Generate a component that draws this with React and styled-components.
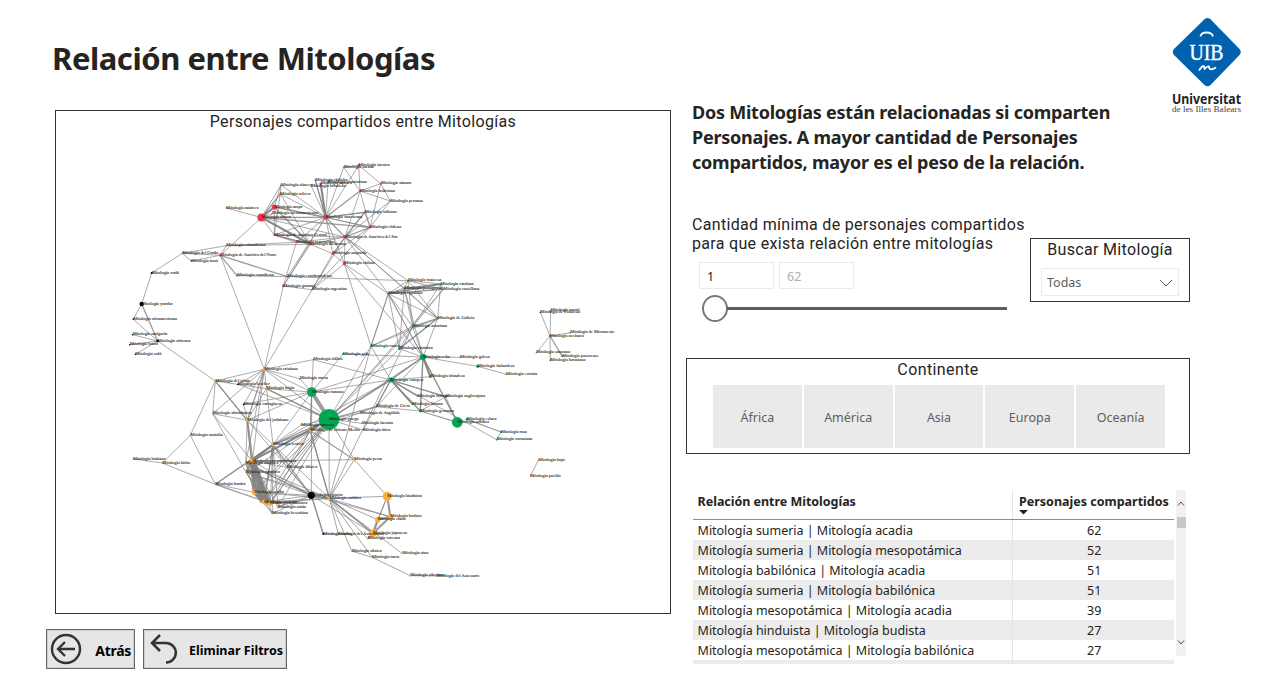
import React from "react";
import styled, { createGlobalStyle } from "styled-components";

const UI = `"Noto Sans", "Open Sans", sans-serif`;
const DIN = `Roboto, "Liberation Sans", sans-serif`;

const GlobalStyle = createGlobalStyle`
  * { box-sizing: border-box; }
  body { margin: 0; background: #fff; color: #252423; font-family: ${UI}; }
`;

const Page = styled.main`
  display: flex;
  gap: 15px;
  width: 1275px;
  height: 677px;
  overflow: hidden;
  background: #fff;
`;
const LeftColumn = styled.section`
  display: flex;
  flex-direction: column;
  width: 671px;
  padding: 36px 0 0 46px;
`;
const RightColumn = styled.section`
  display: flex;
  flex-direction: column;
  width: 560px;
`;
const Title = styled.h1`
  margin: 0 0 0 6px;
  height: 74px;
  font-size: 31px;
  line-height: 45px;
  font-weight: 700;
  letter-spacing: -0.45px;
  white-space: nowrap;
`;
const Panel = styled.div`
  border: 1px solid #333;
  background: #fff;
`;
const PanelTitle = styled.h2`
  margin: 0;
  height: 20px;
  font: 400 16px/22px ${DIN};
  letter-spacing: ${(p) => p.$spacing || 0.34}px;
  text-align: center;
  white-space: nowrap;
`;
const GraphPanel = styled(Panel)`
  width: 616px;
  height: 504px;
  margin-left: 9px;
`;
const Graph = styled.svg`
  display: block;
  width: 614px;
  height: 482px;
  line { stroke: #808080; stroke-opacity: 0.78; }
  text { font: 4.42px "Liberation Serif", serif; fill: #222; stroke: #222; stroke-width: 0.08px; }
`;
const Actions = styled.div`
  display: flex;
  gap: 8px;
  margin-top: 15px;
`;
const ActionButton = styled.button`
  display: flex;
  align-items: center;
  justify-content: space-between;
  width: ${(p) => p.$width}px;
  height: 40px;
  padding: 0 3px 0 3px;
  border: 1px solid #666;
  outline: 1px solid #cfcfcf;
  outline-offset: -2px;
  background: #e6e6e6;
  color: #000;
  font: 700 ${(p) => p.$size}px/20px ${UI};
  letter-spacing: ${(p) => p.$spacing}px;
  white-space: nowrap;
  svg { flex: none; }
  span { padding-top: 3px; }
`;
const Intro = styled.div`
  display: flex;
  justify-content: space-between;
  height: 215px;
  padding: 0 3px 0 6px;
`;
const Statement = styled.p`
  margin: 100px 0 0;
  font-size: 18px;
  line-height: 25px;
  font-weight: 700;
  letter-spacing: -0.23px;
  white-space: nowrap;
`;
const Logo = styled.svg`
  width: 72px;
  height: 100px;
  margin-top: 16px;
  overflow: visible;
`;
const Filters = styled.div`
  display: flex;
  height: 143px;
  padding-left: 6px;
`;
const Threshold = styled.div`
  width: 338px;
`;
const ThresholdLabel = styled.div`
  font: 400 16px/19px ${DIN};
  letter-spacing: 0.32px;
  white-space: nowrap;
`;
const Inputs = styled.div`
  display: flex;
  gap: 5px;
  margin: 9px 0 0 7px;
`;
const NumberBox = styled.div`
  width: 75px;
  height: 27px;
  padding-left: 7px;
  border: 1px solid #eaeaea;
  font-size: 12.5px;
  line-height: 28px;
  color: ${(p) => (p.$muted ? "#b3b0ad" : "#252423")};
`;
const Slider = styled.div`
  display: flex;
  align-items: center;
  margin: 6px 0 0 10px;
`;
const Thumb = styled.div`
  width: 26px;
  height: 27px;
  border: 2px solid #7b7977;
  border-radius: 50%;
  background: #fff;
`;
const Track = styled.div`
  width: 280px;
  height: 3px;
  margin-left: -1px;
  background: #605e5c;
`;
const SearchPanel = styled(Panel)`
  width: 160px;
  height: 64px;
  margin-top: 23px;
`;
const Select = styled.div`
  display: flex;
  align-items: center;
  justify-content: space-between;
  width: 138px;
  height: 28px;
  margin: 9px 0 0 10px;
  padding: 1px 5px 0;
  border: 1px solid #eaeaea;
  font-size: 12.5px;
  color: #605e5c;
`;
const ContinentPanel = styled(Panel)`
  width: 504px;
  height: 96px;
  flex: none;
`;
const Tiles = styled.div`
  display: flex;
  gap: 2px;
  margin: 6px 0 0 26px;
`;
const Tile = styled.div`
  width: 88.8px;
  height: 63px;
  background: #eaeaea;
  color: #605e5c;
  font-size: 12.5px;
  line-height: 66px;
  text-align: center;
`;
const TableArea = styled.div`
  display: flex;
  gap: 2px;
  height: 174px;
  margin: 36px 0 0 7px;
`;
const Table = styled.div`
  width: 481px;
  height: 174px;
  overflow: hidden;
`;
const Row = styled.div`
  display: grid;
  grid-template-columns: 320px 161px;
  grid-template-rows: 100%;
  height: 20px;
  background: ${(p) => (p.$striped ? "#ececec" : "#fff")};
  font-size: 12.5px;
  line-height: 22px;
  white-space: nowrap;
`;
const HeaderRow = styled(Row)`
  height: 30px;
  border-bottom: 1px solid #3aa0ff;
  font-weight: 700;
  line-height: 23px;
`;
const Cell = styled.div`
  padding-left: 4.6px;
  border-right: 1px solid #e6e6e6;
  letter-spacing: -0.03px;
`;
const CountCell = styled.div`
  padding-left: 74px;
`;
const CountHeader = styled.div`
  padding-left: 6px;
  svg { display: block; margin-top: -3px; }
`;
const Scrollbar = styled.div`
  display: flex;
  flex-direction: column;
  align-items: center;
  width: 10px;
  height: 166px;
  padding: 11px 0 11px;
  background: #f1f1f1;
`;
const ScrollThumb = styled.div`
  width: 9px;
  height: 11px;
  margin: 11px 0 auto;
  background: #c8c8c8;
`;

const RED = "#ee334e", GREEN = "#00a651", GOLD = "#fcaf2c", BLACK = "#000", BLUE = "#0081c8";

/* key: [x, y, radius, colour, label] */
const nodes = {
  tuc: [343.7, 167.3, 0.7, RED, "tucana"],
  inc: [358.7, 165.3, 1.2, RED, "incaica"],
  olm: [281, 185, 0.7, RED, "olmeca"],
  tol: [280.3, 194, 1, RED, "tolteca"],
  may: [274.3, 207, 2.6, RED, "maya"],
  mix: [226.3, 208, 0.7, RED, "mixteca"],
  azt: [261.5, 217.5, 4.1, RED, "azteca"],
  mes: [272, 213.7, 0.8, RED, "mesoamericana"],
  cen: [274.3, 235, 1, RED, "de América Central"],
  chi: [315.3, 180, 0.8, RED, "chibcha"],
  mui: [320.7, 183.7, 1.3, RED, "muisca"],
  ecu: [328, 182, 0.8, RED, "ecuatoriana"],
  bra: [311.3, 186.3, 0.7, RED, "brasileña"],
  ama: [325.7, 217.3, 2.4, RED, "americana"],
  aim: [380.7, 183.7, 1, RED, "aimara"],
  bol: [360, 191, 0.9, RED, "boliviana"],
  per: [390.3, 201, 0.7, RED, "peruana"],
  teh: [364.7, 212.3, 1.1, RED, "talhuare"],
  cle: [370, 227.3, 1.2, RED, "chilena"],
  sur: [345, 237, 1.8, RED, "de América del Sur"],
  ven: [296.3, 242.3, 1, RED, "venezolana"],
  mex: [310.3, 244.3, 1.3, RED, "mexicana"],
  map: [332.7, 253.7, 1.2, RED, "mapuche"],
  clo: [344.3, 263.7, 1.6, RED, "chilota"],
  col: [226.3, 245.7, 0.8, RED, "colombiana"],
  nor: [220.3, 255.3, 1.2, RED, "de América del Norte"],
  can: [237, 275.7, 0.9, RED, "canadiense"],
  est: [287.3, 276.7, 0.9, RED, "estadounidense"],
  gua: [283.3, 286, 1.2, RED, "guaraní"],
  arg: [312, 289.7, 0.8, RED, "argentina"],
  car: [182.3, 253.3, 0.8, RED, "del Caribe"],
  inu: [191.3, 261, 0.9, RED, "inuit"],
  vud: [151.7, 273, 1.1, BLACK, "vudú"],
  yor: [141.7, 304, 2.2, BLACK, "yoruba"],
  afm: [133.3, 319.3, 0.8, BLACK, "afroamericana"],
  mal: [132.7, 334.7, 0.8, BLACK, "malgache"],
  afr: [157.7, 341, 1.3, BLACK, "africana"],
  ban: [129.7, 344.7, 0.7, BLACK, "bantú"],
  zul: [135.3, 354.3, 0.8, BLACK, "zulú"],
  cri: [264.3, 369.3, 1.5, GOLD, "cristiana"],
  fra: [408, 280.7, 1, GREEN, "francesa"],
  cat: [440.7, 284, 0.9, GREEN, "catalana"],
  cas: [443.3, 289.3, 0.6, GREEN, "castellana"],
  por: [404.3, 288.3, 0.9, GREEN, "portuguesa"],
  esp: [388.3, 293.7, 1.1, GREEN, "española"],
  gal: [437.7, 318.3, 1.1, GREEN, "de Galicia"],
  ast: [412.7, 326.7, 1.2, GREEN, "asturiana"],
  cab: [399.3, 348.7, 1.2, GREEN, "cántabra"],
  vas: [371, 346.3, 1.1, GREEN, "vasca"],
  gaa: [343, 354, 0.9, GREEN, "gala"],
  cel: [423, 357, 3.1, GREEN, "celta"],
  gls: [460.3, 357.3, 0.8, GREEN, "galesa"],
  fin: [477.7, 366.3, 1.6, GREEN, "finlandesa"],
  eto: [506.3, 374.3, 0.7, GREEN, "estonia"],
  irl: [430.3, 376.7, 1.4, GREEN, "irlandesa"],
  eur: [390.7, 380, 2.5, GREEN, "europea"],
  pol: [540.3, 312.3, 0.9, BLUE, "de Polinesia"],
  mao: [550.7, 310.7, 0.9, BLUE, "maorí"],
  mic: [570.3, 332.7, 0.8, BLUE, "de Micronesia"],
  oce: [550, 336, 1, BLUE, "oceánica"],
  sam: [536.3, 352.7, 0.6, BLUE, "samoana"],
  pas: [562.3, 356.3, 0.9, BLUE, "pascuense"],
  haw: [550.3, 360.3, 0.9, BLUE, "hawaiana"],
  bri: [417.7, 396.3, 0.8, GREEN, "britana"],
  ang: [445.7, 396.7, 1.1, GREEN, "anglosajona"],
  cre: [376.3, 406.7, 0.9, GREEN, "de Creta"],
  lit: [412.3, 404.3, 0.7, GREEN, "lituana"],
  ger: [420.3, 411, 1.4, GREEN, "germana"],
  esl: [467, 419.3, 1.3, GREEN, "eslava"],
  nrd: [457.3, 422.3, 5.4, GREEN, "nórdica"],
  rus: [501, 432, 1, GREEN, "rusa"],
  ucr: [496.7, 439.7, 0.9, GREEN, "ucraniana"],
  ago: [360.3, 413, 0.5, GREEN, "de Argólida"],
  lac: [361.7, 423.3, 0.5, GREEN, "laconia"],
  ati: [363.3, 430, 0.7, GREEN, "ática"],
  hop: [538.3, 460.3, 0.5, RED, "hopi"],
  pue: [530.3, 476, 0.5, RED, "pueblo"],
  isl: [215.3, 381, 1.2, GOLD, "del islam"],
  ber: [238, 384.3, 0.9, BLACK, "bereber"],
  fri: [266.3, 388.7, 1.3, GOLD, "frigia"],
  ctg: [243.7, 404.3, 0.9, BLACK, "cartaginesa"],
  abr: [212.7, 413.7, 0.8, GOLD, "abrahámica"],
  jud: [247.3, 420.3, 1.9, GOLD, "del judaísmo"],
  tra: [299.7, 378.7, 0.7, GREEN, "tracia"],
  ita: [313.3, 359.7, 0.6, GREEN, "itálica"],
  rom: [311.7, 392, 4.8, GREEN, "romana"],
  gri: [329, 419.3, 10.4, GREEN, "griega"],
  gno: [301.3, 425, 1.2, GOLD, "armenia"],
  ori: [310.3, 430.7, 1.3, GOLD, "de Oriente Medio"],
  fen: [273, 444.7, 1.6, GOLD, "fenicia"],
  ana: [190.3, 435.3, 0.6, GOLD, "anatolia"],
  pea: [354.3, 459.7, 1.4, GOLD, "persa"],
  fil: [286.7, 467.3, 0.6, GOLD, "filistea"],
  cnn: [245.7, 463.3, 1.3, GOLD, "cananea"],
  msp: [252.3, 461, 2.7, GOLD, "mesopotámica"],
  uga: [246, 472.3, 1, GOLD, "ugarítica"],
  hat: [133, 459, 0.5, GOLD, "haitiana"],
  hit: [162.3, 463, 1, GOLD, "hitita"],
  hur: [215.3, 484.3, 1, GOLD, "hurrita"],
  aca: [254.3, 492.3, 2.5, GOLD, "acadia"],
  sum: [264, 502, 2.4, GOLD, "sumeria"],
  bab: [270.3, 503.3, 2.6, GOLD, "babilónica"],
  asi: [278, 507.3, 1.2, GOLD, "asiria"],
  bes: [272.3, 513.7, 0.8, GOLD, "beseritina"],
  egi: [311.3, 495.3, 3.6, BLACK, "egipcia"],
  asa: [329.3, 498.3, 1.8, GOLD, "asiática"],
  hin: [387.3, 496.3, 4.5, GOLD, "hinduista"],
  bud: [390.3, 516.7, 2.7, GOLD, "budista"],
  chn: [377.7, 519.7, 2.8, GOLD, "china"],
  jap: [373, 533.3, 3.8, GOLD, "japonesa"],
  cor: [367.7, 538.7, 1.1, GOLD, "coreana"],
  nub: [323.3, 534, 0.9, BLACK, "nubia"],
  asc: [338.3, 534, 0.6, GOLD, "del Asia central"],
  alt: [351.7, 551, 0.8, GOLD, "altaica"],
  tur: [372, 557.3, 1, GOLD, "turca"],
  ain: [402.3, 553.7, 0.6, GOLD, "ainu"],
  sib: [410.3, 575.7, 1, GOLD, "siberiana"],
  asn: [436.7, 576, 0.9, GOLD, "del Asia norte"],
};

/* [stroke width, "origin target target|origin target ..."] */
const links = [
  [0.85, "tuc inc bol ama|inc bol aim ama|bol aim per cle sur|aim per cle|per cle sur|teh cle ama|cle ama|olm azt may ama tol|tol ama cen mex|may ama cen|mix azt|azt nor sur cen mes|cen sur ven mex ama|chi ama|bra ama|ecu ama|ama map clo ven gua cle est|ven col gua sur|mex sur col gua map|map arg clo teh cle|clo arg esp cel|sur clo map gal por esp fra|col car|nor car inu col cri|car vud inu|can est|gua arg cri|arg sur cri cle|est fra|clo vas|vud yor|afm yor afr|mal afr|zul afr|ban afr|afr isl"],
  [0.85, "fra cat por esp gal cas ast|cat por esp cas gal ast|cas por esp ast|por gal ast cab cel|esp gal ast vas cab cel cas|gal cab cel vas|ast cel vas cab|cab cel gri|vas eur gri|gaa cel|cel gls fin gri rom ger nrd eur esp|fin eto|eur irl rom gri ita lit ang ger bri ucr|ang ger nrd|cre ger|cre cel|rus ucr|eur ati|ago gri|lac gri|ati gri|gaa rom|gri pea cas asa ast"],
  [0.85, "pol oce|mao oce|mic oce|sam oce|haw oce|hop pue|isl cri abr fri jud|ber cri gri|ctg rom cri jud|abr cri jud msp uga|fri rom gri jud|cri ita rom msp cnn gri tra fen|tra rom|ita rom|rom fen ori jud|ana isl hur hit|hat hit|hit hur|hur fen aca|ori rom asa gri|gno gri fen|pea asa hin|fil fen gri egi|fen bab sum asi bes asa ori|uga bab sum bes egi asa|cnn aca sum bab egi asa|msp asi bes egi|aca egi bes asa|sum asa egi|bab asa gri|bes egi|asi egi gri|jud fen cnn aca egi|fen cre eur|msp fil pea|rom egi"],
  [0.9, "asa hin bud chn cor asc alt tur ain jap|hin chn jap|alt tur|tur sib|sib asn|egi nub bud asa jap|nub asc|ori sum bab aca|gri sum bab aca cnn msp fil uga|vas esp|asa ast vas"],
  [1.3, "azt may tol ama mex cle|may mex ama|mui ama|chi ama|bol ama|sur ama teh cle|mex cen|nor can est|teh ama|yor afr|esp cat por|por cat|gal ast cab|cel ger irl eur|eur bri ang ger lit|ger nrd|nrd cel|esl rus|oce pas|fri gri|cri jud|isl jud|gri eur ori cre|cre eur|ori pea asa|fen gri egi sum cnn msp|hur fen bab|cnn egi|egi nub asa|msp gri bab|asa jap|jap cor|msp ori"],
  [2.2, "mui ama|azt may|jud msp|bud chn jap|hin bud|chn jap|fen msp|msp uga|azt mex|cel irl"],
  [4, "msp aca|msp sum|msp bab|aca sum|sum bab|rom gri|aca bab"],
  [8, "msp sum"],
];

const edges = links.flatMap(([width, text]) =>
  text.split("|").flatMap((group) => {
    const [from, ...targets] = group.split(" ");
    return targets.map((to) => ({ from: nodes[from], to: nodes[to], width }));
  })
);

function MythGraph() {
  return (
    <Graph viewBox="56 131 614 482">
      {edges.map((e, i) => (
        <line key={i} x1={e.from[0]} y1={e.from[1]} x2={e.to[0]} y2={e.to[1]} strokeWidth={e.width} />
      ))}
      {Object.entries(nodes).map(([key, [x, y, r, color]]) => (
        <circle key={key} cx={x} cy={y} r={r} fill={color} />
      ))}
      {Object.entries(nodes).map(([key, [x, y, , , label]]) => (
        <text key={key} x={x} y={y + 0.5}>Mitología {label}</text>
      ))}
    </Graph>
  );
}

function UibLogo() {
  return (
    <Logo viewBox="0 0 72 100">
      <path d="M33.5 3.3Q36.500 .8 39.500 3.300L68.500 33Q71 36 68.500 39L39.500 69Q36.500 71.500 33.500 69L3 39Q.5 36 3 33Z" fill="#0061af" />
      <path d="M29.500 20.500Q30 16.500 35.500 16.500T42 20.500" fill="none" stroke="#fff" strokeWidth="1.800" />
      <path d="M28 54.500q4-6 5-4t0 3q4-4 5-3 0 5 7 1" fill="none" stroke="#fff" strokeWidth="1.800" />
      <text x="35.500" y="43.500" textAnchor="middle" textLength="34" lengthAdjust="spacingAndGlyphs" fill="#fff" fontFamily="Liberation Serif, serif" fontSize="23" stroke="#fff" strokeWidth=".4">UIB</text>
      <text x="1" y="87.500" textLength="69" lengthAdjust="spacingAndGlyphs" fill="#222" fontFamily="Noto Sans, sans-serif" fontWeight="700" fontSize="13.500">Universitat</text>
      <text x="1" y="95.500" textLength="69" lengthAdjust="spacingAndGlyphs" fill="#444" fontFamily="Liberation Serif, serif" fontSize="8.500">de les Illes Balears</text>
    </Logo>
  );
}

const continents = ["África", "América", "Asia", "Europa", "Oceanía"];
const rows = [
  ["Mitología sumeria | Mitología acadia", 62],
  ["Mitología sumeria | Mitología mesopotámica", 52],
  ["Mitología babilónica | Mitología acadia", 51],
  ["Mitología sumeria | Mitología babilónica", 51],
  ["Mitología mesopotámica | Mitología acadia", 39],
  ["Mitología hinduista | Mitología budista", 27],
  ["Mitología mesopotámica | Mitología babilónica", 27],
];

export default function App() {
  return (
    <>
      <GlobalStyle />
      <Page>
        <LeftColumn>
          <Title>Relación entre Mitologías</Title>
          <GraphPanel>
            <PanelTitle>Personajes compartidos entre Mitologías</PanelTitle>
            <MythGraph />
          </GraphPanel>
          <Actions>
            <ActionButton $width={89} $size={14} $spacing={-0.3}>
              <svg width="32" height="32" viewBox="0 0 32 32" fill="none" stroke="#333" strokeWidth="2.400">
                <circle cx="16" cy="16" r="14" />
                <path d="M25 16H8M15 9l-7 7 7 7" />
              </svg>
              <span>Atrás</span>
            </ActionButton>
            <ActionButton $width={144} $size={12.5} $spacing={0}>
              <svg width="32" height="32" viewBox="0 0 32 32" fill="none" stroke="#333" strokeWidth="2.500">
                <path d="M13 2L5 10l8 8M5 10h14a9.800 9.800 0 0 1 0 19.600" />
              </svg>
              <span>Eliminar Filtros</span>
            </ActionButton>
          </Actions>
        </LeftColumn>
        <RightColumn>
          <Intro>
            <Statement>
              Dos Mitologías están relacionadas si comparten<br />
              Personajes. A mayor cantidad de Personajes<br />
              compartidos, mayor es el peso de la relación.
            </Statement>
            <UibLogo />
          </Intro>
          <Filters>
            <Threshold>
              <ThresholdLabel>
                Cantidad mínima de personajes compartidos<br />
                para que exista relación entre mitologías
              </ThresholdLabel>
              <Inputs>
                <NumberBox>1</NumberBox>
                <NumberBox $muted>62</NumberBox>
              </Inputs>
              <Slider><Thumb /><Track /></Slider>
            </Threshold>
            <SearchPanel>
              <PanelTitle>Buscar Mitología</PanelTitle>
              <Select>
                Todas
                <svg width="14" height="8" fill="none" stroke="#605e5c"><path d="M1 1l6 6 6-6" /></svg>
              </Select>
            </SearchPanel>
          </Filters>
          <ContinentPanel>
            <PanelTitle $spacing={0.4}>Continente</PanelTitle>
            <Tiles>{continents.map((c) => <Tile key={c}>{c}</Tile>)}</Tiles>
          </ContinentPanel>
          <TableArea>
            <Table>
              <HeaderRow>
                <Cell>Relación entre Mitologías</Cell>
                <CountHeader>
                  Personajes compartidos
                  <svg width="9" height="5"><path d="M0 0h9L4.500 4.500Z" fill="#252423" /></svg>
                </CountHeader>
              </HeaderRow>
              {rows.map(([name, count], i) => (
                <Row key={name} $striped={i % 2 === 1}>
                  <Cell>{name}</Cell>
                  <CountCell>{count}</CountCell>
                </Row>
              ))}
              <Row $striped><Cell /><CountCell /></Row>
            </Table>
            <Scrollbar>
              <svg width="8" height="5" fill="none" stroke="#505050"><path d="M1 4.500l3-3.500 3 3.500" /></svg>
              <ScrollThumb />
              <svg width="8" height="5" fill="none" stroke="#505050"><path d="M1 .5L4 4 7 .5" /></svg>
            </Scrollbar>
          </TableArea>
        </RightColumn>
      </Page>
    </>
  );
}
